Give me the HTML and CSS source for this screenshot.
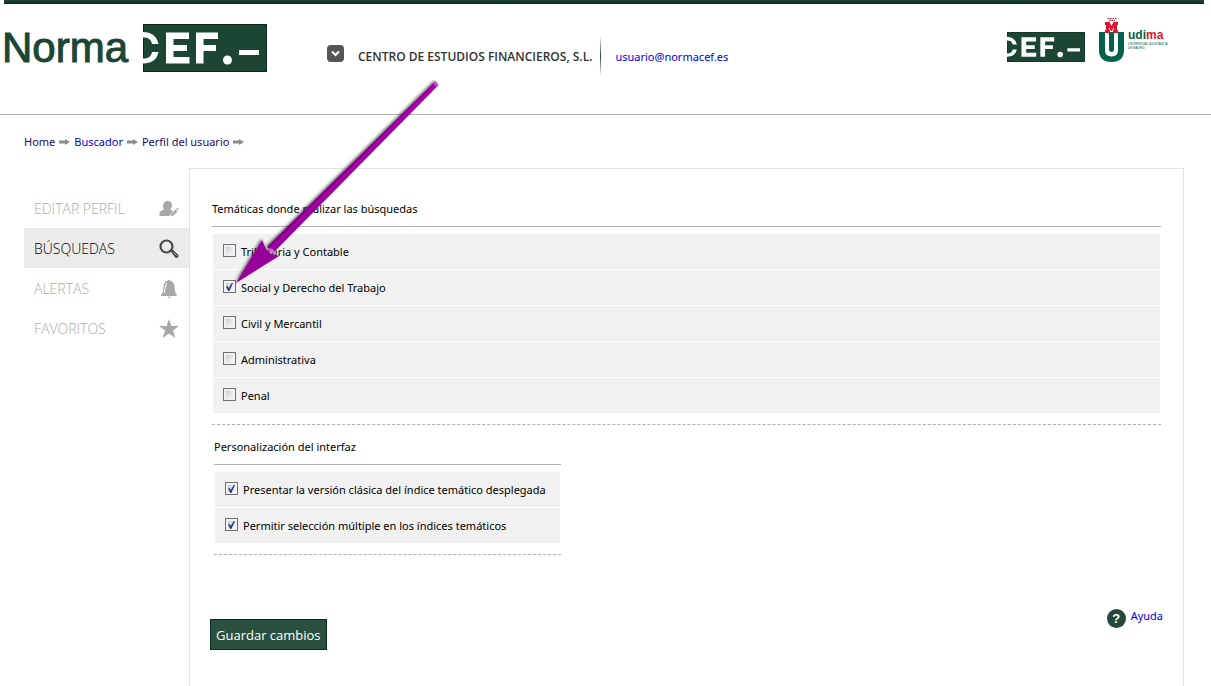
FILE: index.html
```html
<!DOCTYPE html>
<html lang="es">
<head>
<meta charset="utf-8">
<title>NormaCEF - Perfil del usuario</title>
<link rel="stylesheet" href="styles.css">
</head>
<body>
<header class="header">
  <a class="brand" href="#" aria-label="Norma CEF">
    <span class="brand-name">Norma</span>
    <svg class="brand-cef" viewBox="0 0 124 48" aria-hidden="true"><use href="#cef"/></svg>
  </a>
  <div class="account">
    <button class="account-toggle" type="button" aria-label="Desplegar">
      <svg viewBox="0 0 17 17"><path d="M5 6.500l3.500 3.500 3.500-3.500" fill="none" stroke="#fff" stroke-width="2"/></svg>
    </button>
    <span class="account-name">CENTRO DE ESTUDIOS FINANCIEROS, S.L.</span>
    <span class="account-divider"></span>
    <a class="account-mail" href="#">usuario@normacef.es</a>
  </div>
  <div class="partners">
    <svg class="partner-cef" viewBox="0 0 124 48" preserveAspectRatio="none" role="img" aria-label="CEF">
      <g id="cef">
        <path d="M0 0h124v48H0z" fill="#1d4533"/>
        <path d="M0.500 0.500h123v47H.5z" fill="none" stroke="#0b2c1c"/>
        <path d="M0 8C8 8 14 12 15.500 20H9C8 15 5 13.500 0 13.500zM0 39.500C8 39.500 14 36 15.500 28H9C8 33 5 34.500 0 34.500zM23 8.500h23V15H30.500v6H44v6H30.500v6h16v6.500H23zM53 8.500h22V15H60.500v6H73v6H60.500v12.500H53zM96 26h20v5H96z" fill="#fff"/>
        <circle cx="84.500" cy="36" r="4.500" fill="#fff"/>
      </g>
    </svg>
    <a class="udima" href="#" aria-label="Udima">
      <svg class="udima-mark" viewBox="0 0 26 46" aria-hidden="true">
        <path d="M0 15h25v18q0 12-12.500 12T0 33z" fill="#04614a"/>
        <path d="M6 15h13v18q0 6.500-6.500 6.500T6 33z" fill="#fff"/>
        <path d="M10 15h5v17q0 3-2.500 3T10 32z" fill="#04614a"/>
        <path d="M6 16v-3h1V8H6V5h4.500l2 4 2-4H19v3h-1v5h1v3h-5v-3h1v-3l-2 4h-1l-2-4v3h1v3z" fill="#e4122d"/>
        <path d="M8.500 1.500h9M10 3.500h6" stroke="#e4122d" stroke-dasharray="1.500 1"/>
      </svg>
      <span class="udima-text">
        <span class="udima-name">udi<b>ma</b></span>
        <span class="udima-sub">UNIVERSIDAD A DISTANCIA<br>DE MADRID</span>
      </span>
    </a>
  </div>
</header>

<nav class="crumbs" aria-label="Ruta">
  <a class="visited" href="#">Home</a>
  <svg viewBox="0 0 11 6"><path id="ar" d="M0 1.500h6V0l5 3-5 3V4.500H0z" fill="#8c8c8c"/></svg>
  <a href="#">Buscador</a>
  <svg viewBox="0 0 11 6"><use href="#ar"/></svg>
  <a class="visited" href="#">Perfil del usuario</a>
  <svg viewBox="0 0 11 6"><use href="#ar"/></svg>
</nav>

<div class="layout">
  <nav class="side" aria-label="Perfil">
    <a href="#">EDITAR PERFIL
      <svg viewBox="0 0 20 20"><path d="M8.500 2c3 0 4.500 2 4.500 4 0 2-.8 3.200-1.800 4.200l2.800 2-3.500 4.800H.5v-3c0-2 2-2.500 4.500-3.500C4.500 10 4 8 4 6.500c0-2 1.500-4.500 4.500-4.500z"/><path d="M11.500 17.500l1-3 4-4 2 2-4 4zM17.200 9.800l1-1 1.500 1.600-1 1.100z"/></svg></a>
    <a class="active" href="#" aria-current="page">BÚSQUEDAS
      <svg viewBox="0 0 20 20"><circle cx="7.500" cy="7.500" r="6" fill="none" stroke="#4a4a4a" stroke-width="2.200"/><path d="M11 11.500l2-1.500 6 5.500q1 1.500 0 2.800-1.300 1.200-2.800.2z" fill="#4a4a4a"/><path d="M14.500 13.500l3.200 3.200" stroke="#aaa"/></svg></a>
    <a href="#">ALERTAS
      <svg viewBox="0 0 20 20"><path d="M10 .5l1.500 1.300c2.800.7 3.800 3 4 6.200.2 3.500.5 5.500 2.200 7.500v1.500H2.300v-1.500C4 13.500 4.300 11.500 4.500 8c.2-3.200 1.200-5.500 4-6.200zM8 17.800h4l-2 1.500z"/><path d="M8 4C6 6 6.500 10 5 14" fill="none" stroke="#fff"/></svg></a>
    <a href="#">FAVORITOS
      <svg viewBox="0 0 20 20"><path d="M10 0l2.400 7H20l-6 4.400 2.300 7.600L10 14.500 3.700 19 6 11.400 0 7h7.600z"/></svg></a>
  </nav>

  <main class="panel">
    <form>
      <fieldset>
        <legend>Temáticas donde realizar las búsquedas</legend>
        <div class="rows">
          <label><input type="checkbox">Tributaria y Contable</label>
          <label><input type="checkbox" checked>Social y Derecho del Trabajo</label>
          <label><input type="checkbox">Civil y Mercantil</label>
          <label><input type="checkbox">Administrativa</label>
          <label><input type="checkbox">Penal</label>
        </div>
      </fieldset>
      <fieldset class="narrow">
        <legend>Personalización del interfaz</legend>
        <div class="rows">
          <label><input type="checkbox" checked>Presentar la versión clásica del índice temático desplegada</label>
          <label><input type="checkbox" checked>Permitir selección múltiple en los índices temáticos</label>
        </div>
      </fieldset>
      <div class="actions">
        <button class="save" type="submit">Guardar cambios</button>
        <a class="help" href="#"><span class="help-icon">?</span>Ayuda</a>
      </div>
    </form>
  </main>
</div>

<svg class="pointer" viewBox="0 0 220 220" aria-hidden="true">
  <defs>
    <linearGradient id="shaft" gradientUnits="userSpaceOnUse" x1="102.500" y1="102.500" x2="107.500" y2="107.500">
      <stop offset="0" stop-color="#75007a"/><stop offset=".5" stop-color="#a808a8"/><stop offset="1" stop-color="#8c0090"/>
    </linearGradient>
    <filter id="shade" x="-10%" y="-10%" width="120%" height="120%"><feDropShadow dx="-1" dy="-1" stdDeviation="1.500" flood-opacity=".6"/></filter>
  </defs>
  <g filter="url(#shade)">
    <path d="M205 1.500l3.500 3.500L43 173l-6-6z" fill="url(#shaft)"/>
    <path d="M6 203l26-43 4 9 5 5 8 2z" fill="#98009a"/>
  </g>
  <path d="M37 168l3 5 8 2-5-6z" fill="#d88fda" opacity=".7"/>
  <path d="M205 1.500l3.500 3.500-2 2-3.500-3.500z" fill="#d070d2" opacity=".7"/>
</svg>
</body>
</html>
```
FILE: styles.css
```css
* { box-sizing: border-box; }

body {
  margin: 0;
  min-height: 100vh;
  display: flex;
  flex-direction: column;
  position: relative;
  background: #fff;
  color: #000;
  font: 11px/16px "Noto Sans", "Open Sans", sans-serif;
}

a { color: #0000e0; text-decoration: none; }

.header {
  display: flex;
  align-items: flex-start;
  height: 115px;
  padding: 0 39px 0 2px;
  border-bottom: 1px solid #b0b0b0;
  background: linear-gradient(#1d4533, #0b2c1c) 4px 0 / calc(100% - 11px) 4px no-repeat;
}

.brand { display: flex; gap: 13px; padding-top: 24px; width: 325px; }
.brand-name { width: 128px; color: #1d4533; font: 42px/48px "Liberation Sans", sans-serif; -webkit-text-stroke: 1px #1d4533; }
.brand-cef { width: 124px; height: 48px; }

.account { display: flex; align-items: center; padding-top: 38px; height: 76px; }
.account-toggle {
  width: 17px; height: 17px; padding: 0; margin: 0 14px 8px 0;
  border: 0; border-radius: 4px; background: #555;
}
.account-toggle svg { display: block; }
.account-name { color: #333; font-family: "Open Sans", sans-serif; font-size: 12px; font-weight: 600; }
.account-divider { width: 1px; height: 40px; margin: 0 14px 2px 8px; background: linear-gradient(#fff, #1d4533, #fff); }

.partners { display: flex; gap: 14px; margin-left: auto; padding-top: 17px; }
.partner-cef { width: 78px; height: 30px; margin-top: 15px; }
.udima { display: flex; gap: 3px; }
.udima-mark { width: 26px; height: 46px; }
.udima-text { display: flex; flex-direction: column; width: 44px; padding-top: 11px; }
.udima-name { color: #04614a; font: bold 12px/14px "Liberation Sans", sans-serif; }
.udima-name b { color: #e4122d; }
.udima-sub { color: #04614a; font: 3px/4px "Liberation Sans", sans-serif; white-space: nowrap; }

.crumbs { display: flex; align-items: center; gap: 4px; padding: 19px 24px 18px; }
.crumbs svg { width: 11px; height: 6px; }
.crumbs .visited { color: #1a0a70; }

.layout { flex: 1; display: flex; padding: 0 27px 0 24px; }

.side { width: 165px; padding-top: 20px; }
.side a {
  display: flex; align-items: center; justify-content: space-between;
  height: 40px; padding: 1px 10px 0;
  color: #aaa; font: 300 14px/20px "Open Sans", sans-serif;
}
.side svg { width: 20px; height: 20px; fill: #a8a8a8; }
.side .active { background: #ebebeb; color: #000; }

.panel { flex: 1; padding: 32px 22px 36px 20px; border: 1px solid #e2e2e2; border-bottom: 0; }

fieldset { margin: 0 0 14px 2px; padding: 0 0 11px; border: 0; border-bottom: 1px dashed #b0b0b0; }
legend { display: block; width: 100%; padding: 0 0 9px; border-bottom: 1px solid #b0b0b0; }
.rows { display: flex; flex-direction: column; gap: 1px; padding: 7px 1px 0; }
.rows label { display: flex; align-items: center; height: 35px; padding: 0 10px; background: #f1f1f1; }
.narrow { width: fit-content; min-width: 347px; margin: 0 0 64px 4px; }

input[type="checkbox"] {
  appearance: none;
  width: 13px; height: 13px; margin: 0 5px 2px 0;
  border: 1px solid #707070;
  background: linear-gradient(135deg, #c8cdd3, #f8f8f8) content-box #fff;
  padding: 2px;
  display: grid; place-items: center;
}
input[type="checkbox"]:checked::before {
  content: "";
  width: 7px; height: 8px;
  background: #203b80;
  clip-path: polygon(0 45%, 22% 38%, 40% 62%, 82% 0, 100% 0, 48% 100%, 32% 100%);
}

.actions { display: flex; justify-content: space-between; align-items: flex-start; }
.save {
  height: 31px; padding: 0 5px;
  border: 1px solid #0b2c1c; background: #2a5140; color: #fff;
  font: 13px/20px "Open Sans", sans-serif;
}
.help { display: flex; gap: 5px; margin: -11px -2px 0 0; }
.help-icon {
  width: 19px; height: 19px; margin-top: 1px; border-radius: 50%;
  background: #23493a; color: #fff; font: bold 13px/19px "Liberation Sans", sans-serif; text-align: center;
}

.pointer { position: absolute; left: 230px; top: 80px; width: 220px; height: 220px; pointer-events: none; }
```
